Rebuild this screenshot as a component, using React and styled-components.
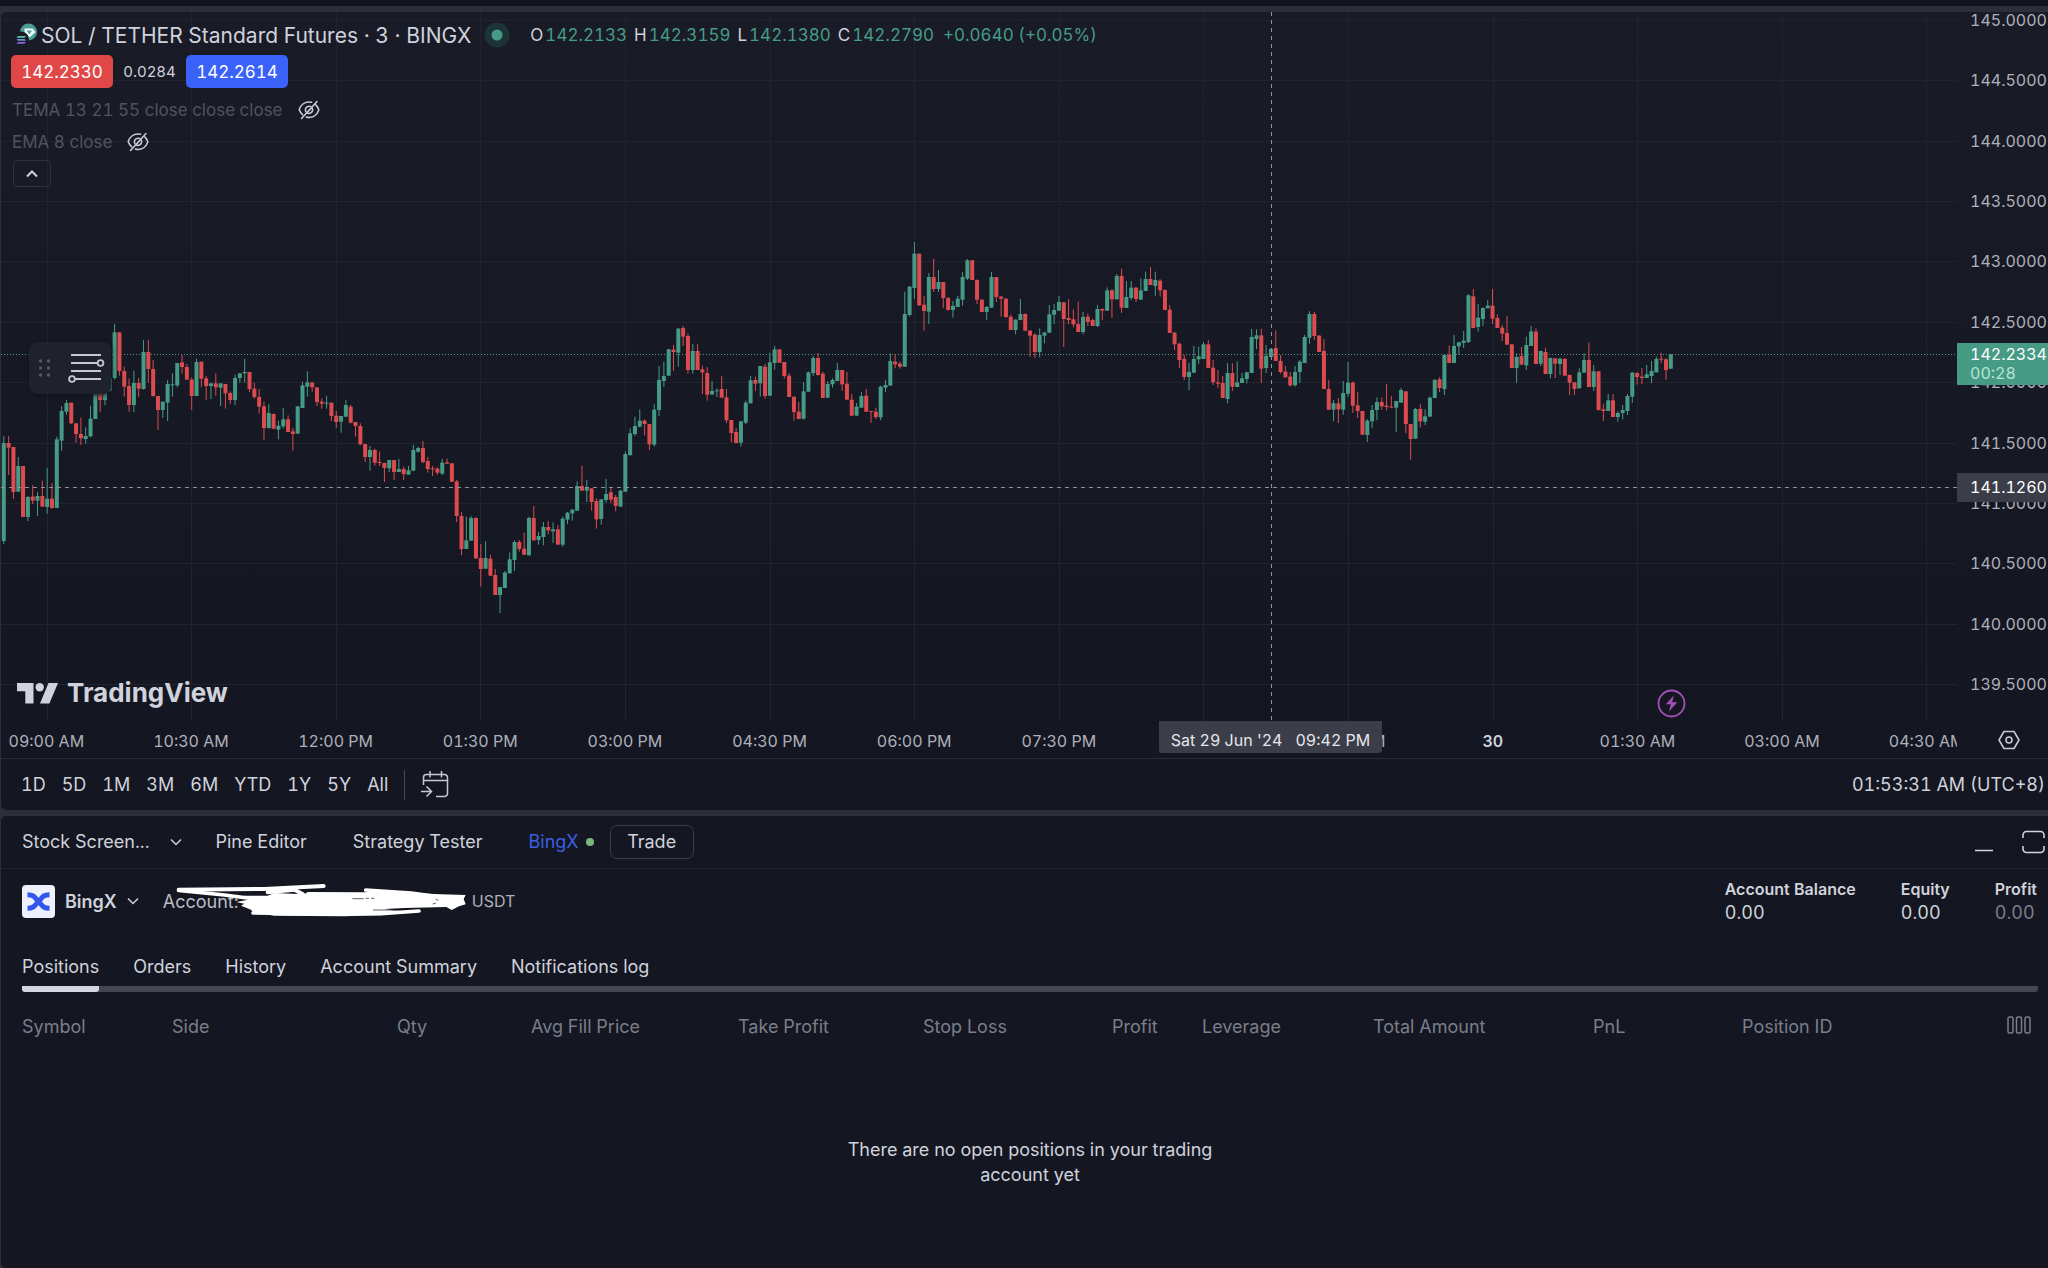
import React from "react";
import styled, { createGlobalStyle } from "styled-components";

const c = {
  bg: "#141721",
  edge: "#2c2e39",
  line: "#2a2d38",
  text: "#d0d2dc",
  axis: "#aeb0ba",
  muted: "#7b7e89",
  green: "#469b85",
  red: "#dc4b50",
  blue: "#3a62f8",
};

const GlobalStyle = createGlobalStyle`
  * { box-sizing: border-box; }
  body {
    margin: 0;
    background: ${c.edge};
    color: ${c.text};
    font-family: Inter, "Liberation Sans", sans-serif;
    font-size: 18px;
    font-variant-numeric: tabular-nums;
  }
  button {
    font: inherit;
    font-variant-numeric: inherit;
    color: inherit;
    background: none;
    border: 0;
    padding: 0;
    cursor: pointer;
    white-space: nowrap;
  }
  svg { display: block; flex: none; }
`;

const Page = styled.div`
  display: flex;
  flex-direction: column;
  gap: 6px;
  min-height: 100vh;
  overflow: hidden;
`;
const TopStrip = styled.div`
  height: 6px;
  background: #12141e;
`;
const Panel = styled.section`
  margin-left: 1px;
  background: ${c.bg};
  border-radius: 5px 0 0 5px;
  overflow: hidden;
`;
const BottomPanel = styled(Panel)`
  flex: 1;
`;

/* chart */
const ChartRow = styled.div`
  display: flex;
  height: 709px;
  background: linear-gradient(#191b26, #141721);
`;
const Plot = styled.div`
  position: relative;
  flex: 1;
  min-width: 0;
  overflow: hidden;
`;
const PriceAxis = styled.div`
  position: relative;
  width: 91px;
  padding: 0 0 29px 13px;
  display: flex;
  flex-direction: column;
  justify-content: space-between;
  font-size: 16px;
  line-height: 16px;
  color: ${c.axis};
`;
const AxisTag = styled.div`
  position: absolute;
  left: 0;
  right: 0;
  top: ${(p) => p.$top}px;
  padding: ${(p) => p.$pad}px 0 ${(p) => p.$pad}px 13px;
  line-height: 19px;
  color: #fff;
  background: ${(p) => p.$color};
`;
const Countdown = styled.div`
  color: #b5e3d5;
`;
const TimeRow = styled.div`
  position: relative;
  display: flex;
  height: 38px;
  border-bottom: 1px solid ${c.line};
`;
const TimeClip = styled.div`
  flex: 1;
  min-width: 0;
  overflow: hidden;
`;
const TimeLabels = styled.div`
  display: grid;
  grid-template-columns: repeat(14, 1fr);
  width: calc(100% + 69px);
  margin-left: -27px;
  line-height: 40px;
  font-size: 16px;
  text-align: center;
  color: ${c.axis};
`;
const TimeLabel = styled.span`
  font-weight: ${(p) => (p.$bold ? 600 : 400)};
  color: ${(p) => (p.$bold ? c.text : "inherit")};
`;
const TimeTag = styled.div`
  position: absolute;
  left: 1158px;
  top: 0;
  width: 223px;
  height: 32px;
  display: flex;
  justify-content: center;
  gap: 13px;
  font-size: 16px;
  line-height: 38px;
  color: #e6e7ec;
  background: #3b3d48;
  border-radius: 0 0 3px 3px;
  white-space: nowrap;
`;
const AxisCorner = styled.button`
  width: 91px;
  display: flex;
  align-items: center;
  justify-content: center;
  padding-left: 12px;
`;

/* legend over the plot */
const Legend = styled.div`
  position: absolute;
  left: 10px;
  top: 8px;
  display: flex;
  flex-direction: column;
  align-items: flex-start;
`;
const TitleRow = styled.div`
  display: flex;
  align-items: center;
  height: 30px;
  margin-bottom: 5px;
  padding-left: 3px;
  white-space: nowrap;
`;
const Title = styled.h1`
  margin: 0 13px 0 3px;
  font-size: 21px;
  font-weight: 400;
`;
const Ohlc = styled.div`
  display: flex;
  gap: 7px;
  margin-left: 20px;
  font-size: 17px;
`;
const Value = styled.span`
  color: ${c.green};
  margin-left: 2px;
`;
const PriceRow = styled.div`
  display: flex;
  align-items: center;
  height: 33px;
  margin-bottom: 6px;
`;
const PriceButton = styled.button`
  width: 102px;
  height: 33px;
  border-radius: 5px;
  font-size: 17px;
  color: #fff;
  background: ${(p) => p.$color};
`;
const Spread = styled.span`
  width: 73px;
  text-align: center;
  font-size: 15px;
`;
const IndicatorRow = styled.div`
  display: flex;
  align-items: center;
  gap: 15px;
  height: 32px;
  padding-left: 1px;
  font-size: 17px;
  color: #51545f;
`;
const CollapseButton = styled.button`
  display: flex;
  align-items: center;
  justify-content: center;
  width: 38px;
  height: 27px;
  margin: 2px 0 0 2px;
  border: 1px solid #30333e;
  border-radius: 4px;
`;
const DrawTool = styled.button`
  position: absolute;
  left: 28px;
  top: 330px;
  width: 82px;
  height: 52px;
  border-radius: 8px;
  background: #1f212c;
  box-shadow: 0 1px 5px #10121a;
`;
const Brand = styled.div`
  position: absolute;
  left: 16px;
  bottom: 12px;
  display: flex;
  align-items: center;
  gap: 9px;
  font-size: 26px;
  line-height: 32px;
  font-weight: 700;
`;
const BoltButton = styled.button`
  position: absolute;
  left: 1656px;
  bottom: 3px;
`;

/* range toolbar */
const RangeBar = styled.div`
  display: flex;
  align-items: center;
  height: 51px;
  padding: 0 3px 0 20px;
`;
const Ranges = styled.div`
  display: flex;
  gap: 16px;
  padding-right: 16px;
  margin-right: 16px;
  border-right: 1px solid #474a55;
  line-height: 30px;
`;
const Clock = styled.button`
  margin-left: auto;
`;

/* trading panel */
const PanelTabs = styled.div`
  display: flex;
  align-items: center;
  height: 53px;
  padding: 0 3px 1px 21px;
  border-bottom: 1px solid #1f222d;
`;
const PanelTab = styled.button`
  display: flex;
  align-items: center;
  gap: ${(p) => p.$gap || 7}px;
  margin-right: ${(p) => p.$after}px;
  color: ${(p) => (p.$active ? "#3a5fe0" : "inherit")};
`;
const Dot = styled.i`
  width: 8px;
  height: 8px;
  border-radius: 50%;
  background: #76b77c;
`;
const TradeButton = styled.button`
  width: 84px;
  height: 34px;
  border: 1px solid #3a3d48;
  border-radius: 7px;
`;
const WindowButtons = styled.div`
  display: flex;
  gap: 28px;
  margin-left: auto;
`;
const AccountRow = styled.div`
  display: flex;
  align-items: center;
  height: 64px;
  padding: 0 11px 0 21px;
`;
const Broker = styled.button`
  display: flex;
  align-items: center;
  gap: 10px;
  margin-right: 24px;
  font-weight: 600;
`;
const AccountId = styled.span`
  position: relative;
  width: 309px;
  color: #bbbdc7;
`;
const Redaction = styled.svg`
  position: absolute;
  left: 0;
  top: -8px;
`;
const Currency = styled.span`
  font-size: 16px;
  color: ${c.axis};
`;
const Stats = styled.dl`
  display: flex;
  gap: 45px;
  margin: 0 0 0 auto;
`;
const Stat = styled.div`
  line-height: 23px;
  dt {
    font-size: 16px;
    font-weight: 600;
  }
  dd {
    margin: 0;
    color: ${(p) => (p.$dim ? c.muted : "inherit")};
  }
`;
const Tabs = styled.nav`
  display: flex;
  gap: 34px;
  margin: 16px 10px 0 21px;
  border-bottom: 6px solid #444650;
  border-radius: 3px;
`;
const Tab = styled.button`
  height: 34px;
  margin-bottom: -6px;
  padding-bottom: 3px;
  box-sizing: content-box;
  border-bottom: 6px solid ${(p) => (p.$active ? "#d4d6e2" : "transparent")};
  border-radius: 3px;
`;
const TableWrap = styled.div`
  margin: 0 10px 0 21px;
`;
const Table = styled.table`
  width: 100%;
  table-layout: fixed;
  border-collapse: collapse;
  th {
    height: 69px;
    padding: 0;
    text-align: left;
    font-weight: 400;
    color: ${c.muted};
    white-space: nowrap;
  }
  td {
    padding: 76px 0 0;
  }
`;
const Empty = styled.p`
  width: 400px;
  margin: 0 auto;
  line-height: 25px;
  text-align: center;
`;

/* each candle: direction, high, body top, body bottom, low; in thirds of a pixel */
const CANDLES = `
G648,669,963,972 R648,669,683,765 R681,681,816,837 G711,738,815,815 R738,738,891,891 G828,831,891,903
R795,830,842,852 G815,828,842,888 R782,828,860,860 G744,836,861,881 R790,836,864,866 G650,658,864,864
G558,573,662,692 G540,549,575,584 R548,548,610,612 R610,610,642,668 R593,642,655,675 G622,648,657,671
G557,596,649,652 G520,520,597,597 R500,510,540,576 G500,510,540,556 G465,474,512,515 G312,337,474,479
R336,337,453,467 R440,453,500,530 R475,498,555,575 G452,489,555,576 R474,489,506,530 G360,396,507,509
R360,396,447,488 R420,447,528,530 R528,528,570,630 G545,545,570,593 G480,492,548,603 G460,493,496,530
G429,429,496,502 R405,427,441,461 R432,441,479,479 R472,479,528,570 G416,426,528,528 R425,425,476,502
R468,475,498,540 G490,490,498,537 R460,490,502,527 G490,490,503,558 R492,492,520,566 R514,519,540,552
G464,474,540,555 G460,460,474,488 G417,456,460,488 R456,456,507,516 R488,506,531,536 R507,531,560,581
R545,559,624,660 G552,579,624,626 R580,582,626,628 G602,617,629,658 G564,598,619,626 R586,598,636,636
R624,634,642,692 G558,559,641,642 G485,496,564,564 G454,487,500,530 R485,488,502,515 R502,502,546,558
R535,545,551,566 G528,548,551,566 R548,548,588,603 R572,587,606,624 G588,588,605,638 G540,555,590,590
R555,560,608,610 R606,606,618,650 R610,618,673,675 R672,672,711,726 G678,690,711,752 R686,690,728,737
R695,726,729,738 R728,729,744,786 G720,720,745,756 R720,720,756,780 G716,747,756,756 R740,747,762,780
G738,751,764,764 G675,690,752,754 G680,684,695,698 R663,684,726,730 R710,723,747,758 R738,745,748,768
R742,746,758,764 G717,728,761,765 R716,727,731,731 R730,730,785,786 R780,784,888,906 R876,888,987,1006
G890,961,987,987 G888,894,962,962 R892,894,1015,1017 R972,1014,1047,1099 G964,1014,1046,1046 R1005,1016,1067,1067
R1047,1065,1125,1125 G1101,1101,1125,1179 G1053,1058,1104,1104 G997,1018,1060,1060 G961,966,1020,1053 R960,966,987,995
R938,986,1004,1004 G890,894,1006,1006 R858,894,961,961 G936,948,960,974 G906,921,951,976 R903,921,931,943
G907,928,934,969 R915,928,974,974 G890,896,974,980 G876,878,899,912 G868,869,880,902 G784,798,872,872
R737,798,812,812 G780,802,812,846 R804,805,846,872 R835,843,898,926 G838,838,897,914 G777,822,840,848
R803,817,839,849 R825,831,858,874 G810,812,860,860 G694,702,815,815 G625,640,705,708 G590,618,642,648
G568,602,620,622 R598,602,612,646 R612,612,673,690 G552,569,674,680 G438,480,570,588 G425,468,483,501
G387,388,467,467 R375,389,396,452 G324,326,398,440 R318,324,350,378 R340,348,450,461 G372,393,450,461
R372,393,450,450 R437,448,457,522 R441,459,524,542 G483,513,523,525 G505,511,513,531 R468,507,533,533
R507,532,601,609 R600,600,639,667 R624,636,669,669 G603,604,668,680 G542,548,608,612 G468,481,550,550
R470,480,491,513 G438,438,490,530 R432,440,528,536 G398,427,527,528 G377,388,429,449 R388,388,428,428
R426,426,468,475 R460,467,531,531 R530,530,576,602 R546,575,597,597 G486,514,596,599 G455,457,515,515
G408,414,459,468 R399,414,465,467 R455,461,534,534 G483,492,533,534 G475,480,493,503 G429,450,483,483
R450,450,493,512 R456,491,539,539 R522,539,587,587 G549,560,587,587 G516,528,563,563 R507,527,575,575
R573,573,576,608 R563,575,591,597 G497,500,592,601 G480,495,503,516 G400,423,497,497 R402,425,433,445
R425,431,440,446 G215,282,440,441 G198,200,285,289 G66,101,204,237 R101,101,256,258 R228,254,273,332
G159,171,275,312 R117,171,207,216 G150,186,207,216 R186,186,234,264 R231,234,270,272 G243,258,270,293
G228,236,261,261 G156,171,239,257 G117,121,176,180 R120,121,180,180 R178,180,239,252 R237,239,276,276
G258,261,276,300 G156,171,263,264 R171,171,231,246 R228,230,236,290 R234,236,291,293 R284,290,330,330
G298,299,330,343 G237,282,300,300 R280,282,332,332 R330,332,347,410 R340,344,396,413 G325,345,396,412
G335,338,347,370 G255,283,338,338 G252,270,284,312 G228,246,272,272 R246,247,297,381 R237,294,300,312
R268,298,313,322 R245,312,336,336 G275,291,336,343 R280,290,306,318 R296,300,318,318 G255,267,318,321
R265,267,272,300 G202,211,272,272 R207,211,238,294 G162,168,238,238 R146,168,263,279 G183,231,264,264
G183,203,234,240 R201,203,237,246 G175,211,239,239 G155,177,213,213 R141,177,195,195 G155,180,198,228
R178,182,211,230 R208,210,270,270 R255,269,339,339 R336,338,373,390 R368,371,420,444 R405,417,471,480
G428,456,471,510 G378,417,458,458 G380,409,418,432 G366,373,417,417 R360,373,444,444 R420,443,487,495
R450,487,491,504 R468,489,534,534 G429,459,537,550 R430,459,500,513 G424,487,501,501 G459,475,489,489
G455,457,477,490 G327,351,459,459 G328,346,357,387 R326,346,446,489 G375,408,444,459 G384,387,411,412
R331,384,423,423 R405,423,456,461 R438,455,472,472 R456,470,496,500 G438,456,496,500 G420,425,456,489
G345,351,429,429 G274,282,353,371 R276,282,348,359 R345,347,396,396 R357,393,507,507 R480,507,569,570
G540,550,569,604 R534,550,568,609 G483,519,569,584 G426,488,521,530 R484,488,557,579 R515,556,573,594
R573,573,644,645 G597,602,645,666 G555,570,604,625 G532,546,570,600 R533,546,559,569 R492,557,561,571
R528,560,563,563 G543,543,563,636 G504,510,548,548 R514,514,612,640 R612,612,657,719 G564,567,656,656
R552,567,604,622 G568,589,605,615 G530,533,590,590 G477,480,534,534 R472,478,504,516 G402,405,507,525
R376,404,429,429 G345,378,429,429 G365,367,379,404 G333,362,369,384 G222,226,366,369 R207,229,324,325
G252,293,321,335 G262,264,297,318 G240,257,265,265 R207,257,296,312 R283,294,324,324 R315,323,341,363
R288,339,374,374 R372,373,444,444 G400,411,444,489 R381,408,434,434 G350,375,436,450 G318,334,378,378
R325,335,432,432 G392,393,431,438 R383,396,462,462 G413,414,462,475 R414,415,431,474 G414,416,432,465
R414,417,467,467 R464,465,488,525 R487,487,507,525 G445,457,505,505 G400,420,458,458 R368,420,501,502
G435,454,501,513 R453,454,570,572 R551,568,573,603 G522,541,573,573 R522,541,591,591 G574,579,591,605
G555,570,579,598 G522,528,573,585 G456,458,530,549 R457,459,471,494 R444,470,474,492 G435,463,474,474
G423,453,468,489 G410,417,457,457 R398,416,419,430 R415,418,450,479 G402,403,446,446
`
  .trim()
  .split(/\s+/)
  .map((s) => ({ up: s[0] === "G", v: s.slice(1).split(",").map((n) => 208 + n / 3) }));

const PRICES = Array.from({ length: 12 }, (_, i) => (145 - i / 2).toFixed(4));
const TIMES = [
  "09:00 AM", "10:30 AM", "12:00 PM", "01:30 PM", "03:00 PM", "04:30 PM", "06:00 PM",
  "07:30 PM", "09:00 PM", "10:30 PM", "30", "01:30 AM", "03:00 AM", "04:30 AM",
];
const RANGES = ["1D", "5D", "1M", "3M", "6M", "YTD", "1Y", "5Y", "All"];
const OHLC = [["O", "142.2133"], ["H", "142.3159"], ["L", "142.1380"], ["C", "142.2790"]];
const COLUMNS = [
  ["Symbol", 150], ["Side", 225], ["Qty", 134], ["Avg Fill Price", 207], ["Take Profit", 185],
  ["Stop Loss", 189], ["Profit", 90], ["Leverage", 171], ["Total Amount", 220], ["PnL", 149],
  ["Position ID", 265],
];

const CandleChart = () => (
  <svg width="100%" height="709" role="img" aria-label="SOL / TETHER candles">
    <g stroke="#21242f" shapeRendering="crispEdges">
      {PRICES.map((p, i) => {
        const y = Math.round(8 + i * 60.36) + 0.5;
        return <line key={p} x1="0" x2="100%" y1={y} y2={y} />;
      })}
      {TIMES.map((t, i) => {
        const x = Math.round(45.5 + i * 144.6) + 0.5;
        return <line key={i} x1={x} x2={x} y1="0" y2="100%" />;
      })}
    </g>
    <line x1="0" x2="100%" y1="342.5" y2="342.5" stroke={c.green} strokeDasharray="1 2" />
    {CANDLES.map(({ up, v: [high, top, bottom, low] }, i) => {
      const x = 2.8 + i * 4.818;
      return (
        <g key={i} fill={up ? c.green : c.red}>
          <rect x={x - 0.5} y={high} width="1" height={low - high} />
          <rect x={x - 2} y={top} width="4" height={Math.max(1, bottom - top)} />
        </g>
      );
    })}
    <g stroke="#8f929c" strokeDasharray="4 4" shapeRendering="crispEdges">
      <line x1="0" x2="100%" y1="475.5" y2="475.5" />
      <line x1="1270.5" x2="1270.5" y1="0" y2="100%" />
    </g>
  </svg>
);

const SymbolIcon = () => (
  <svg width="24" height="26" viewBox="0 0 24 26">
    <circle cx="14.500" cy="10" r="8.500" fill="#4a9d94" />
    <path d="M10.500 6.500h8l3 3.500-6 5.500-5-5z" fill="#f3fbfa" />
    <path d="M12.500 8.500h5.500l-2.500 4z" fill="#4a9d94" />
    <circle cx="7" cy="17.500" r="8" fill="#191b26" />
    <path d="M4 14h8l-1.500 1.800h-8z" fill="#58c9b0" />
    <path d="M2.500 17h8l1.500 1.800H4z" fill="#6f8fd6" />
    <path d="M4 20h8l-1.500 1.800h-8z" fill="#8c63d6" />
  </svg>
);

const StatusIcon = () => (
  <svg width="26" height="26" viewBox="0 0 26 26">
    <circle cx="13" cy="13" r="12.500" fill="#1c3436" />
    <circle cx="13" cy="13" r="5.500" fill={c.green} />
  </svg>
);

const HiddenEye = () => (
  <svg width="22" height="20" viewBox="0 0 22 20" fill="none" stroke="#c9cbd4" strokeWidth="1.600" strokeLinecap="round">
    <path d="M13.500 2.300C6.500.8 2.600 5.500 1.200 9.500c.7 2 1.800 3.800 3.300 5.200M8.500 17.100c7 1.500 10.900-3.200 12.300-7.200-.7-2-1.700-3.700-3-5" />
    <path d="M12.700 6.400C9.800 5.600 7.400 7.300 7.400 9.900c0 .7.200 1.200.5 1.700M9.600 13.200c2.700.6 5-1 5-3.500 0-.6-.1-1.100-.4-1.600" />
    <path d="M3.500 18.500 19 1.500M9.200 12.500l3.600-4" />
  </svg>
);

const Chevron = ({ up }) => (
  <svg width="12" height="8" viewBox="0 0 12 8" fill="none" stroke={c.text} strokeWidth={up ? 2 : 1.5}>
    <path d={up ? "M1 6.500 6 1.500l5 5" : "M1 1.500l5 5 5-5"} />
  </svg>
);

const ToolIcon = () => (
  <svg width="82" height="52" viewBox="0 0 82 52" fill="none" stroke="#c6c8d1" strokeWidth="1.800">
    <g fill="#555863" stroke="none">
      {[19, 26, 33].map((y) => (
        <React.Fragment key={y}>
          <circle cx="11.500" cy={y} r="1.700" />
          <circle cx="19.500" cy={y} r="1.700" />
        </React.Fragment>
      ))}
    </g>
    <path d="M42 13h30M42 21h26.500M42 29h30M46 37h26" />
    <circle cx="71.500" cy="21" r="2.900" />
    <circle cx="43" cy="37" r="2.900" />
  </svg>
);

const TvMark = () => (
  <svg width="41" height="21" viewBox="0 0 41 21" fill={c.text}>
    <path d="M0 0h16.500v20.500H8.300V8.200H0z" />
    <circle cx="22.700" cy="4.200" r="4.200" />
    <path d="M31.500 0H41l-8.600 20.500H23z" />
  </svg>
);

const Bolt = () => (
  <svg width="29" height="29" viewBox="0 0 29 29">
    <circle cx="14.500" cy="14.500" r="13" fill="none" stroke="#a44fb8" strokeWidth="1.800" />
    <path d="M16.800 6.500 8.800 15.300h5L12 22.500l8.300-9.300h-5.100z" fill="#a44fb8" />
  </svg>
);

const HexIcon = () => (
  <svg width="22" height="20" viewBox="0 0 22 20" fill="none" stroke="#c6c8d1" strokeWidth="1.600">
    <path d="M6 1.500h10l5 8.500-5 8.500H6L1 10z" strokeLinejoin="round" />
    <circle cx="11" cy="10" r="3" />
  </svg>
);

const GoToDate = () => (
  <svg width="28" height="28" viewBox="0 0 28 28" fill="none" stroke="#c6c8d1" strokeWidth="1.500">
    <path d="M2.500 14V6.500a3 3 0 0 1 3-3h18a3 3 0 0 1 3 3v16a3 3 0 0 1-3 3H15M2.500 9.500h24M9 0v6.500M20.500 0v6.500M0 20.500h10M5.500 15.500l5 5-5 5" />
  </svg>
);

const BrokerLogo = () => (
  <svg width="33" height="33" viewBox="0 0 33 33">
    <rect width="33" height="33" rx="4" fill="#eef0fb" />
    <g fill="none" stroke="#3257ee" strokeWidth="5">
      <path d="M5.500 9.800c7.500 0 7.500 3.500 11 6.700s3.500 6.700 11 6.700" />
      <path d="M5.500 23.200c7.500 0 7.500-3.500 11-6.700s3.500-6.700 11-6.700" />
    </g>
  </svg>
);

const Scribble = () => (
  <Redaction width="307" height="36" viewBox="456 36 921 108" aria-hidden="true">
    <g fill="none" stroke="#fff" strokeLinecap="round" strokeLinejoin="round">
      <path d="M503 56 760 54 938 45" strokeWidth="12" />
      <path d="M503 58 640 72 745 86" strokeWidth="11" />
      <path d="M770 64 850 56 876 70" strokeWidth="12" />
      <path d="M1064 57 1200 66 1290 78" strokeWidth="11" />
      <path d="M726 126 900 128 1110 128 1224 120" strokeWidth="11" />
    </g>
    <path
      fill="#fff"
      d="M676 93 712 86 700 74 770 74 790 66 880 70 890 63 1060 64 1110 60 1190 66 1290 70 1364 72 1358 84 1364 100 1344 106 1322 117 1306 108 1180 111 1120 114 1180 122 1120 132 1000 136 790 134 726 124 720 116 690 104 700 98z"
    />
    <path d="M1024 83h34M1064 82h10M1080 82h10M1086 117h70M1265 99l10-3M1274 85l8 3" stroke="#15171f" strokeWidth="2" />
  </Redaction>
);

const Minimize = () => (
  <svg width="20" height="24" viewBox="0 0 20 24">
    <path d="M1 20.500h18" stroke={c.text} strokeWidth="1.500" />
  </svg>
);
const Maximize = () => (
  <svg width="23" height="24" viewBox="0 0 23 24" fill="none" stroke={c.text} strokeWidth="1.600">
    <path d="M1 8V5a3.500 3.500 0 0 1 3.500-3.500h14A3.500 3.500 0 0 1 22 5v3M1 16v3a3.500 3.500 0 0 0 3.500 3.500h14A3.500 3.500 0 0 0 22 19v-3" />
  </svg>
);
const ColumnsIcon = () => (
  <svg width="24" height="18" viewBox="0 0 24 18" fill="none" stroke={c.muted} strokeWidth="1.500">
    <rect x="1" y="1" width="5" height="16" rx="1.500" />
    <rect x="9.500" y="1" width="5" height="16" rx="1.500" />
    <rect x="18" y="1" width="5" height="16" rx="1.500" />
  </svg>
);

export default function App() {
  return (
    <Page>
      <GlobalStyle />
      <TopStrip />
      <Panel>
        <ChartRow>
          <Plot>
            <CandleChart />
            <Legend>
              <TitleRow>
                <SymbolIcon />
                <Title>SOL / TETHER Standard Futures · 3 · BINGX</Title>
                <StatusIcon />
                <Ohlc>
                  {OHLC.map(([k, v]) => (
                    <span key={k}>
                      {k}
                      <Value>{v}</Value>
                    </span>
                  ))}
                  <Value>+0.0640 (+0.05%)</Value>
                </Ohlc>
              </TitleRow>
              <PriceRow>
                <PriceButton $color="#e04848">142.2330</PriceButton>
                <Spread>0.0284</Spread>
                <PriceButton $color={c.blue}>142.2614</PriceButton>
              </PriceRow>
              <IndicatorRow>
                TEMA 13 21 55 close close close
                <button aria-label="Show TEMA"><HiddenEye /></button>
              </IndicatorRow>
              <IndicatorRow>
                EMA 8 close
                <button aria-label="Show EMA"><HiddenEye /></button>
              </IndicatorRow>
              <CollapseButton aria-label="Collapse legend"><Chevron up /></CollapseButton>
            </Legend>
            <DrawTool aria-label="Drawing tool"><ToolIcon /></DrawTool>
            <Brand><TvMark />TradingView</Brand>
            <BoltButton aria-label="Events"><Bolt /></BoltButton>
          </Plot>
          <PriceAxis>
            {PRICES.map((p) => <span key={p}>{p}</span>)}
            <AxisTag $top={331} $pad={2} $color={c.green}>
              142.2334
              <Countdown>00:28</Countdown>
            </AxisTag>
            <AxisTag $top={461} $pad={5} $color="#3b3d48">141.1260</AxisTag>
          </PriceAxis>
        </ChartRow>
        <TimeRow>
          <TimeClip>
            <TimeLabels>
              {TIMES.map((t, i) => <TimeLabel key={i} $bold={t === "30"}>{t}</TimeLabel>)}
            </TimeLabels>
          </TimeClip>
          <AxisCorner aria-label="Axis settings"><HexIcon /></AxisCorner>
          <TimeTag><span>Sat 29 Jun '24</span><span>09:42 PM</span></TimeTag>
        </TimeRow>
        <RangeBar>
          <Ranges>{RANGES.map((r) => <button key={r}>{r}</button>)}</Ranges>
          <button aria-label="Go to date"><GoToDate /></button>
          <Clock>01:53:31 AM (UTC+8)</Clock>
        </RangeBar>
      </Panel>
      <BottomPanel>
        <PanelTabs>
          <PanelTab $gap={20} $after={34}>Stock Screen... <Chevron /></PanelTab>
          <PanelTab $after={46}>Pine Editor</PanelTab>
          <PanelTab $after={46}>Strategy Tester</PanelTab>
          <PanelTab $active $after={16}>BingX<Dot /></PanelTab>
          <TradeButton>Trade</TradeButton>
          <WindowButtons>
            <button aria-label="Minimize"><Minimize /></button>
            <button aria-label="Maximize"><Maximize /></button>
          </WindowButtons>
        </PanelTabs>
        <AccountRow>
          <Broker><BrokerLogo />BingX<Chevron /></Broker>
          <AccountId>Account:<Scribble /></AccountId>
          <Currency>USDT</Currency>
          <Stats>
            <Stat><dt>Account Balance</dt><dd>0.00</dd></Stat>
            <Stat><dt>Equity</dt><dd>0.00</dd></Stat>
            <Stat $dim><dt>Profit</dt><dd>0.00</dd></Stat>
          </Stats>
        </AccountRow>
        <Tabs>
          {["Positions", "Orders", "History", "Account Summary", "Notifications log"].map((t, i) => (
            <Tab key={t} $active={i === 0}>{t}</Tab>
          ))}
        </Tabs>
        <TableWrap>
          <Table>
            <colgroup>
              {COLUMNS.map(([name, width]) => <col key={name} width={width} />)}
              <col width="31" />
            </colgroup>
            <thead>
              <tr>
                {COLUMNS.map(([name]) => <th key={name} scope="col">{name}</th>)}
                <th scope="col"><button aria-label="Columns"><ColumnsIcon /></button></th>
              </tr>
            </thead>
            <tbody>
              <tr>
                <td colSpan={12}>
                  <Empty>There are no open positions in your trading account yet</Empty>
                </td>
              </tr>
            </tbody>
          </Table>
        </TableWrap>
      </BottomPanel>
    </Page>
  );
}
